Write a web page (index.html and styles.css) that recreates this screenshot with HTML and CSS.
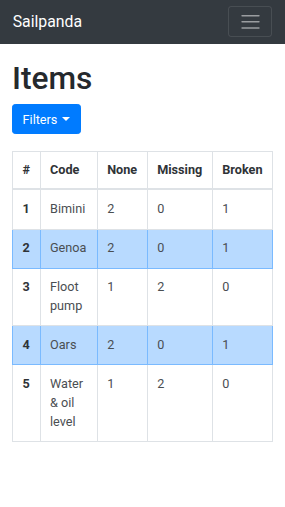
FILE: index.html
```html
<!DOCTYPE html>
<html>
<head>
    <title>Sailpanda - Items</title>
    <link rel="stylesheet" href="styles.css">
</head>
<body>
    <nav class="navbar">
        <a class="brand" href="#">Sailpanda</a>
        <button class="toggler" type="button">
            <svg class="toggler-icon" viewBox="0 0 30 30">
                <path stroke="rgba(255,255,255,0.5)" stroke-width="2" stroke-linecap="round" d="M4 7h22M4 15h22M4 23h22"/>
            </svg>
        </button>
    </nav>

    <div class="container">
        <h1>Items</h1>

        <div class="filters">
            <button class="btn-primary" type="button">Filters<span class="caret"></span></button>
        </div>

        <table class="items">
            <thead>
                <tr>
                    <th>#</th>
                    <th>Code</th>
                    <th>None</th>
                    <th>Missing</th>
                    <th>Broken</th>
                </tr>
            </thead>
            <tbody>
                <tr>
                    <th>1</th>
                    <td>Bimini</td>
                    <td>2</td>
                    <td>0</td>
                    <td>1</td>
                </tr>
                <tr class="row-primary">
                    <th>2</th>
                    <td>Genoa</td>
                    <td>2</td>
                    <td>0</td>
                    <td>1</td>
                </tr>
                <tr>
                    <th>3</th>
                    <td>Floot pump</td>
                    <td>1</td>
                    <td>2</td>
                    <td>0</td>
                </tr>
                <tr class="row-primary">
                    <th>4</th>
                    <td>Oars</td>
                    <td>2</td>
                    <td>0</td>
                    <td>1</td>
                </tr>
                <tr>
                    <th>5</th>
                    <td>Water &amp; oil level</td>
                    <td>1</td>
                    <td>2</td>
                    <td>0</td>
                </tr>
            </tbody>
        </table>
    </div>
</body>
</html>
```

FILE: styles.css
```css
body {
    margin: 0;
    font-family: Roboto, "Liberation Sans", sans-serif;
    font-size: 12.67px;
    line-height: 19px;
    color: #212529;
    background: #fff;
}

.navbar {
    background: #343a40;
    display: flex;
    justify-content: space-between;
    align-items: center;
    padding: 6.3px 12.7px;
}
.brand {
    color: #fff;
    text-decoration: none;
    font-size: 15.8px;
    line-height: 24px;
}
.toggler {
    background: transparent;
    border: 1px solid rgba(255,255,255,0.1);
    border-radius: 3px;
    padding: 3.2px 9.5px;
    width: 44px;
    height: 31px;
    display: flex;
    align-items: center;
    justify-content: center;
}
.toggler-icon {
    width: 23.7px;
    height: 23.7px;
    display: block;
}

.container {
    padding: 0 12px;
}
h1 {
    font-size: 31.7px;
    font-weight: 500;
    line-height: 38px;
    margin: 16px 0 6.3px;
    color: #25292d;
}

.filters {
    margin-bottom: 16.5px;
}
.btn-primary {
    font-family: inherit;
    font-size: 12.67px;
    line-height: 19px;
    color: #fff;
    background: #007bff;
    border: 1px solid #007bff;
    border-radius: 3.2px;
    padding: 4.75px 9.5px;
    width: 69px;
}
.caret {
    display: inline-block;
    margin-left: 5px;
    vertical-align: 2.5px;
    border-top: 4px solid #fff;
    border-left: 4px solid transparent;
    border-right: 4px solid transparent;
}

.items {
    width: 100%;
    border-collapse: collapse;
    border: 1px solid #dee2e6;
}
.items th,
.items td {
    text-align: left;
    vertical-align: top;
    padding: 9.7px 9.5px;
    line-height: 18.7px;
    border: 1px solid #dee2e6;
}
.items th {
    font-weight: 700;
    color: #2f3337;
}
.items thead th {
    padding-top: 9.2px;
    padding-bottom: 8.7px;
    border-bottom: 2px solid #dee2e6;
}
.items td {
    color: #4a4e52;
}
.items .row-primary th,
.items .row-primary td {
    background: #b8daff;
    border-color: #7abaff;
}
```
